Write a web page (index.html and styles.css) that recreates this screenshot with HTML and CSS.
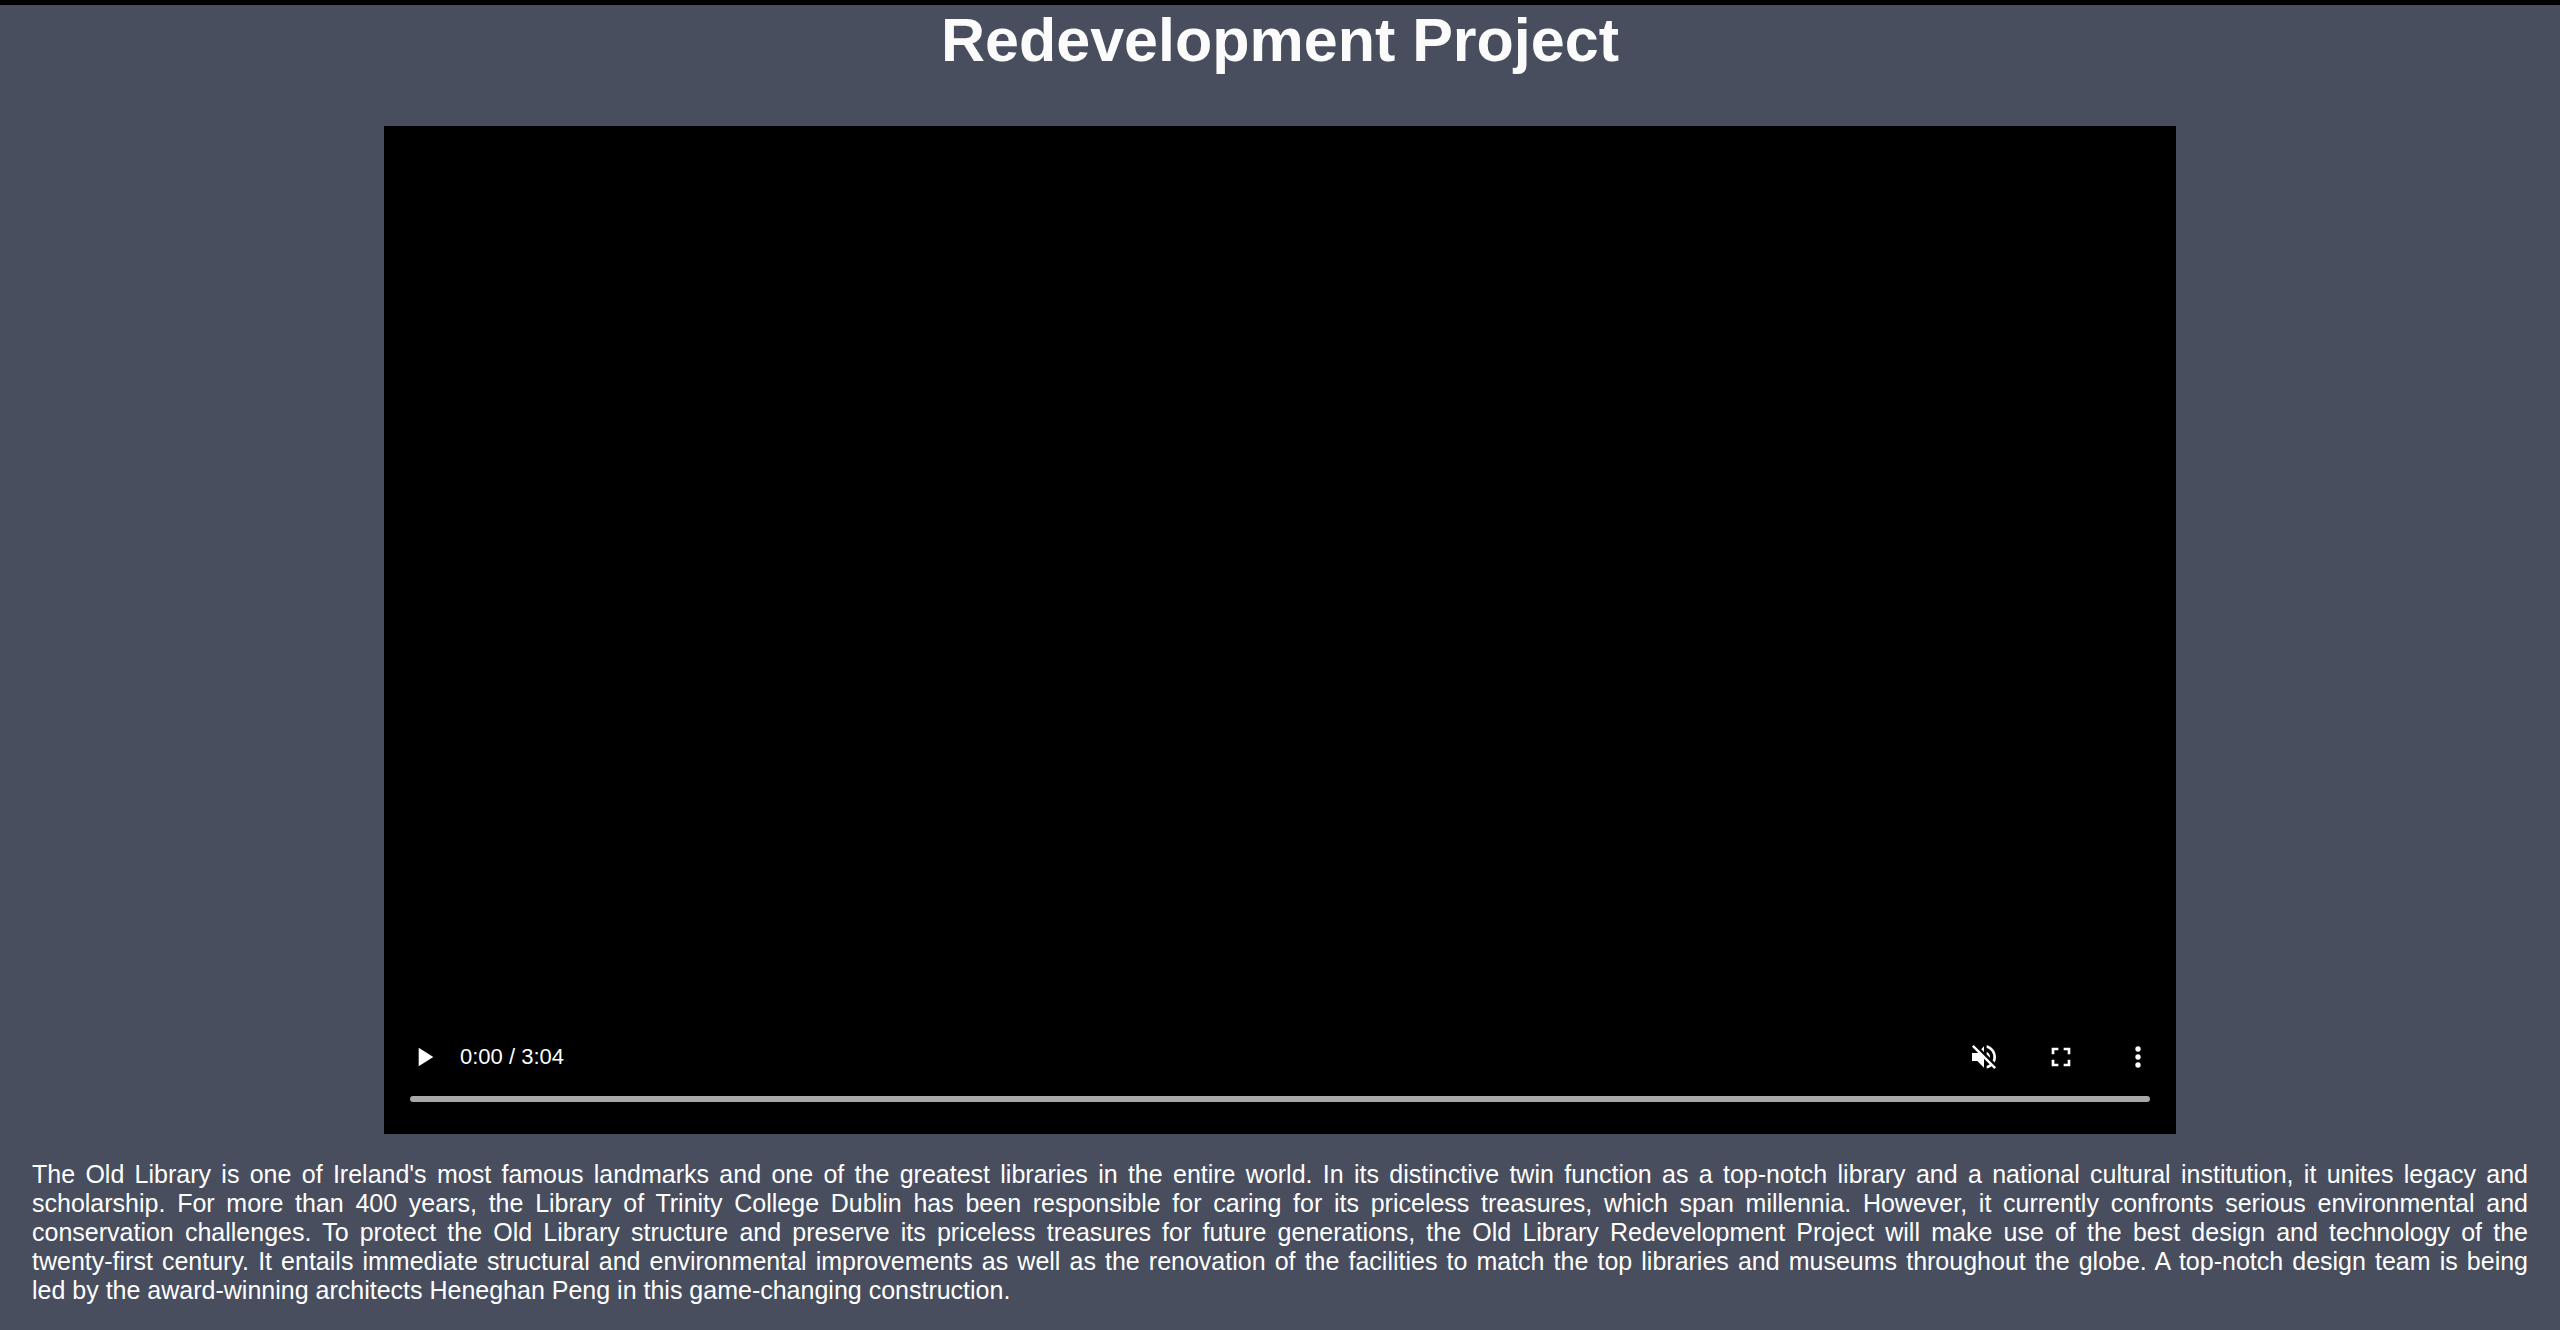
FILE: index.html
```html
<!DOCTYPE html>
<html lang="en">
<head>
<meta charset="utf-8">
<meta name="viewport" content="width=device-width, initial-scale=1">
<title>Redevelopment Project</title>
<link rel="stylesheet" href="styles.css">
</head>
<body>
<main class="page">
  <h1 class="title">Redevelopment Project</h1>
  <section class="player" aria-label="Video player">
    <div class="controls">
      <button class="control" type="button" aria-label="Play">
        <svg viewBox="0 0 24 24" aria-hidden="true"><path d="M8 5v14l11-7z"/></svg>
      </button>
      <span class="time">0:00 / 3:04</span>
      <div class="actions">
        <button class="control" type="button" aria-label="Unmute">
          <svg viewBox="0 0 24 24" aria-hidden="true"><path d="M4.300 3 3 4.300 7.700 9H3v6h4l5 5v-6.700l4.200 4.200c-.7.500-1.400.9-2.200 1.100v2.100c1.400-.3 2.600-.9 3.700-1.800L19.700 21l1.300-1.300zM12 4 9.900 6.100 12 8.200zM14 3.200v2.100c2.900.9 5 3.500 5 6.700 0 .9-.2 1.800-.5 2.600l1.500 1.500c.6-1.200 1-2.600 1-4.100 0-4.300-3-7.900-7-8.800zM14 8v2.200l2.500 2.400v-.6c0-1.800-1-3.300-2.500-4z"/></svg>
        </button>
        <button class="control" type="button" aria-label="Full screen">
          <svg viewBox="0 0 24 24" aria-hidden="true"><path d="M7 14H5v5h5v-2H7zM5 10h2V7h3V5H5zM17 17h-3v2h5v-5h-2zM14 5v2h3v3h2V5z"/></svg>
        </button>
        <button class="control" type="button" aria-label="More options">
          <svg viewBox="0 0 24 24" aria-hidden="true"><circle cx="12" cy="6" r="2"/><circle cx="12" cy="12" r="2"/><circle cx="12" cy="18" r="2"/></svg>
        </button>
      </div>
    </div>
    <input class="seek" type="range" min="0" max="184" value="0" aria-label="Seek">
  </section>
  <p class="description">The Old Library is one of Ireland's most famous landmarks and one of the greatest libraries in the entire world. In its distinctive twin function as a top-notch library and a national cultural institution, it unites legacy and scholarship. For more than 400 years, the Library of Trinity College Dublin has been responsible for caring for its priceless treasures, which span millennia. However, it currently confronts serious environmental and conservation challenges. To protect the Old Library structure and preserve its priceless treasures for future generations, the Old Library Redevelopment Project will make use of the best design and technology of the <span class="phrase">twenty-first century.</span> It entails immediate structural and environmental improvements as well as the renovation of the facilities to match the top libraries and museums throughout the globe. A top-notch design team is being <span class="phrase">led by the</span> award-winning architects Heneghan Peng in this game-changing construction.</p>
</main>
</body>
</html>
```

FILE: styles.css
```css
* {
  box-sizing: border-box;
}

body {
  margin: 0;
  background: #484e5e;
  color: #fff;
  font-family: "Liberation Sans", Arial, Helvetica, sans-serif;
}

.page {
  border-top: 5px solid #000;
}

.title {
  margin: 0 0 51px;
  color: #fbfbfb;
  font-size: 61px;
  line-height: 70px;
  text-align: center;
}

.player {
  display: flex;
  flex-direction: column;
  justify-content: flex-end;
  width: 70%;
  aspect-ratio: 16 / 9;
  margin: 0 auto;
  padding-bottom: 32px;
  background: #000;
}

.controls {
  display: flex;
  align-items: center;
  gap: 20px;
  padding: 0 22px 0 24px;
}

.control {
  width: 32px;
  height: 32px;
  padding: 0;
  border: 0;
  background: none;
  color: #fff;
  cursor: pointer;
}

.control svg {
  display: block;
  width: 32px;
  height: 32px;
  fill: currentColor;
}

.time {
  font-size: 22px;
  line-height: 32px;
}

.actions {
  display: flex;
  gap: 45px;
  margin-left: auto;
}

.seek {
  appearance: none;
  height: 6px;
  margin: 23px 26px 0;
  border-radius: 3px;
  background: #a9a7a9;
  cursor: pointer;
}

.seek::-webkit-slider-thumb {
  appearance: none;
  width: 0;
  height: 0;
}

.description {
  margin: 26px 32px;
  font-size: 25px;
  line-height: 29px;
  text-align: justify;
}

.phrase {
  white-space: nowrap;
}
```
